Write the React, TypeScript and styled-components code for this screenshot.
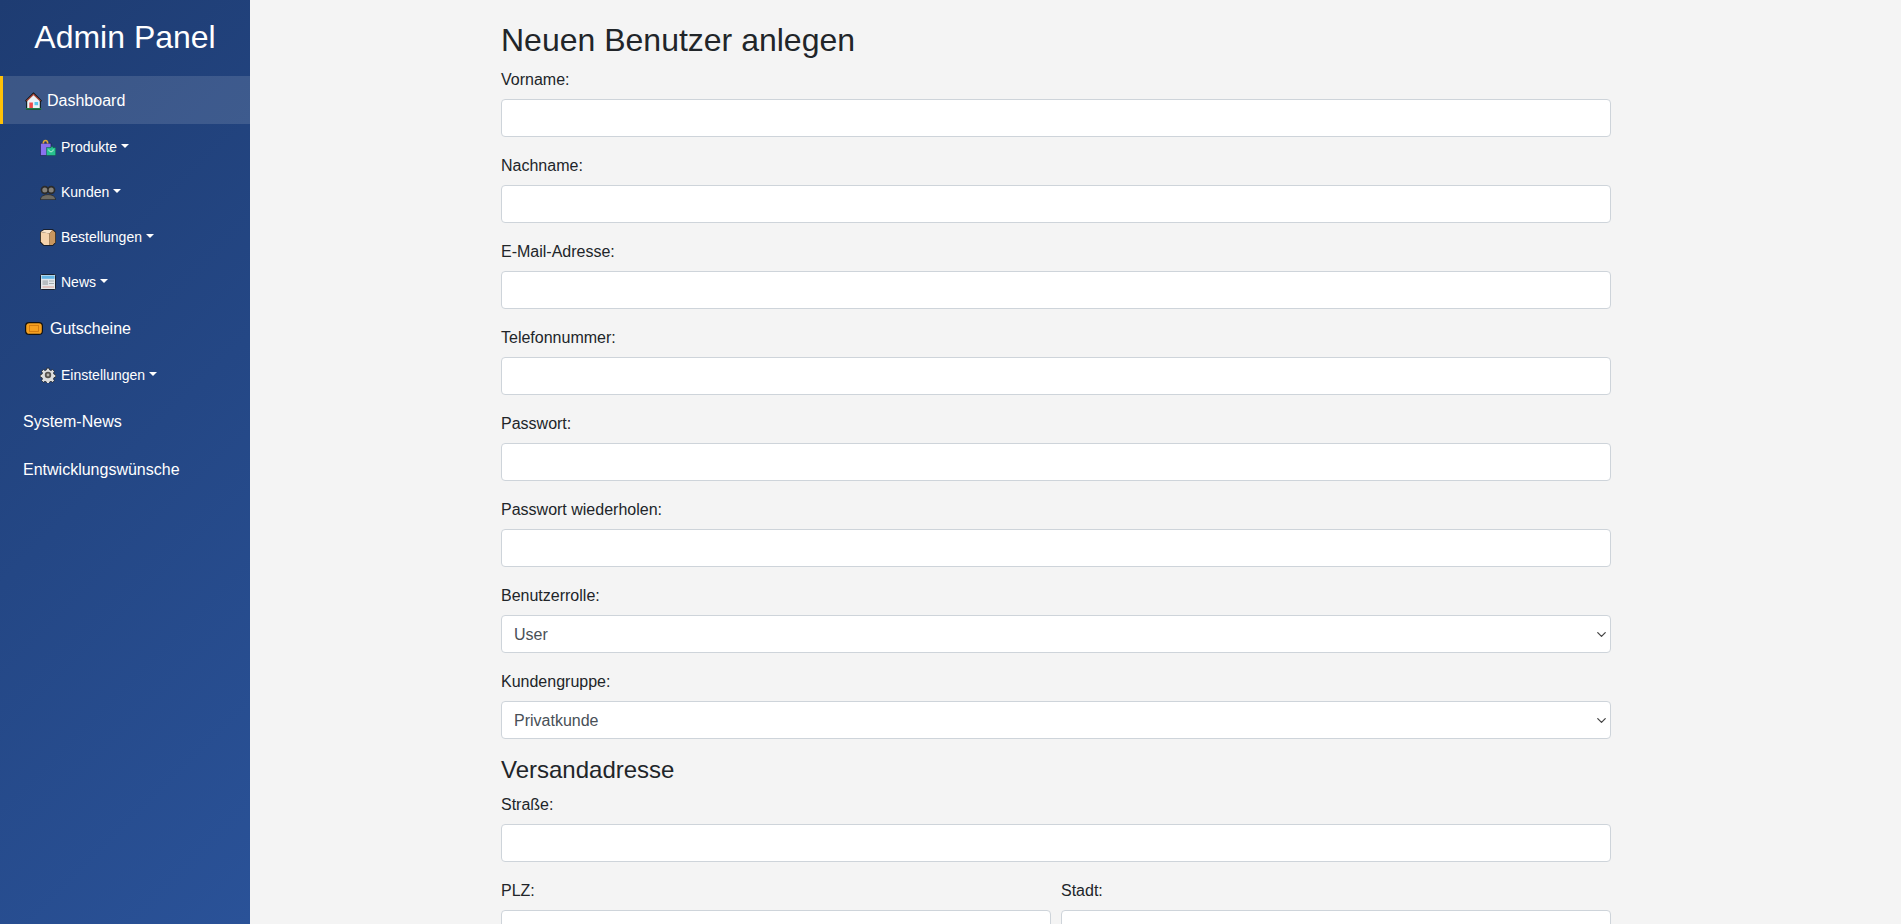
import styled, { createGlobalStyle } from 'styled-components';
import { ChevronDown } from 'lucide-react';

const GlobalStyle = createGlobalStyle`
  html, body {
    margin: 0;
    height: 100%;
    overflow: hidden;
  }
  body {
    background: #f4f4f4;
    color: #212529;
    font-family: "Liberation Sans", Arial, sans-serif;
    font-size: 16px;
    line-height: 1.5;
  }
  * {
    box-sizing: border-box;
  }
`;

const HouseIcon = () => (
  <svg width="17" height="18" viewBox="0 0 17 18">
    <path d="M8.500 .3 17 8.800 15.800 10v7.700H1.200V10L0 8.800z" fill="#0c1410" />
    <path d="M8.500 2.500 14.800 8.500v8H2.200v-8z" fill="#eaf3f6" />
    <path d="M8.500 1.500 16 8.800l-1 .7-6.500-6.200L2 9.500l-1-.7z" fill="#b04a40" />
    <rect x="4.300" y="10.500" width="3.600" height="6" fill="#ee4c4a" />
    <rect x="9.500" y="10" width="3.600" height="3.200" fill="#56c6ea" />
    <rect x=".8" y="16" width="15.400" height="1.600" fill="#1f7a45" />
  </svg>
);

const BagsIcon = () => (
  <svg width="16" height="17" viewBox="0 0 16 17">
    <path d="M.4 4.200h10.600v12.400H.4z" fill="#8a72ee" stroke="#1a1a44" strokeWidth=".7" />
    <path d="M3.300 4.500C3.300 .4 7.700 .4 7.700 4.500" fill="none" stroke="#e0a838" strokeWidth="1.600" />
    <path d="M6.500 8.500H11l1-2 1 2h2.700v8.100H6.500z" fill="#27c08f" stroke="#0f4a42" strokeWidth=".5" />
    <path d="M8.800 10.500c0 3 4.400 3 4.400 0" fill="none" stroke="#c6f5dd" strokeWidth="1" />
  </svg>
);

const BustsIcon = () => (
  <svg width="16" height="15" viewBox="0 0 16 15">
    <circle cx="4.800" cy="5" r="4.200" fill="#2b2b2b" />
    <circle cx="11.200" cy="5" r="4.200" fill="#2b2b2b" />
    <circle cx="4.800" cy="5" r="2.500" fill="#86827a" />
    <circle cx="11.200" cy="5" r="2.500" fill="#86827a" />
    <path d="M.3 14.700c0-6.800 15.400-6.800 15.400 0z" fill="#6e6b63" stroke="#151515" strokeWidth=".6" />
  </svg>
);

const BoxIcon = () => (
  <svg width="16" height="17" viewBox="0 0 16 17">
    <path d="M0 3 3.500.2h9.500L16 3.200v10.300l-3 3.300H3.500L0 13.200z" fill="#141414" />
    <path d="M.8 3 4 1h8.500L9.500 4.500z" fill="#f8e2c8" />
    <path d="M.8 3 9.500 4.500V16H4L.8 12.800z" fill="#f4d2ac" />
    <path d="M9.500 4.500 12.500 1l2.800 2.500v9.700L12.700 16H9.500z" fill="#c8965f" />
  </svg>
);

const NewsIcon = () => (
  <svg width="16" height="16" viewBox="0 0 16 16">
    <rect x=".5" y=".5" width="15" height="15" rx="1" fill="#e4e8eb" stroke="#0e1420" strokeWidth=".9" />
    <rect x="1.600" y="1.600" width="13" height="3.200" fill="#63b4e4" />
    <rect x="2.500" y="6.300" width="5.500" height="4.700" fill="#b8bec2" />
    <rect x="9" y="6.500" width="5" height="1" fill="#a4abaf" />
    <rect x="9" y="9" width="5" height="1" fill="#a4abaf" />
    <rect x="2.500" y="12.500" width="11.500" height="1" fill="#dca196" />
  </svg>
);

const TicketIcon = () => (
  <svg width="18" height="13" viewBox="0 0 18 13">
    <rect x=".6" y=".6" width="16.800" height="11.800" rx="3.500" fill="#f5a020" stroke="#111" strokeWidth="1.200" />
    <rect x="4.500" y="3.500" width="9" height="6" fill="none" stroke="#d07a10" strokeWidth=".9" />
  </svg>
);

const GearIcon = () => (
  <svg width="16" height="16" viewBox="0 0 16 16">
    <path
      d="M6.500.4h3l.4 2.100 1.600.7 1.800-1.200 2.200 2.200-1.200 1.800.7 1.500 2 .5v3l-2 .4-.7 1.600 1.200 1.800-2.200 2.100-1.800-1.200-1.600.7-.4 2h-3l-.4-2-1.600-.7-1.800 1.200-2.200-2.100 1.200-1.800-.7-1.600-2-.4v-3l2-.5.7-1.500-1.200-1.800 2.200-2.200 1.800 1.200 1.600-.7z"
      fill="#dedede"
      stroke="#1c1c1c"
      strokeWidth=".8"
      transform="translate(1.100 .8) scale(.86)"
    />
    <circle cx="8" cy="8" r="3.200" fill="#57534e" />
    <circle cx="8" cy="8" r="1.400" fill="#b8b3aa" />
  </svg>
);

const menu = [
  { label: 'Dashboard', icon: <HouseIcon />, active: true, gap: 5 },
  { label: 'Produkte', icon: <BagsIcon />, sub: true },
  { label: 'Kunden', icon: <BustsIcon />, sub: true },
  { label: 'Bestellungen', icon: <BoxIcon />, sub: true },
  { label: 'News', icon: <NewsIcon />, sub: true },
  { label: 'Gutscheine', icon: <TicketIcon />, gap: 7 },
  { label: 'Einstellungen', icon: <GearIcon />, sub: true },
  { label: 'System-News' },
  { label: 'Entwicklungswünsche' },
];

const accountFields = ['Vorname', 'Nachname', 'E-Mail-Adresse', 'Telefonnummer', 'Passwort', 'Passwort wiederholen'];

const Select = ({ value }: { value: string }) => (
  <SSelectWrap>
    <SSelect defaultValue={value}>
      <option>{value}</option>
    </SSelect>
    <SChevron size={15} strokeWidth={2} />
  </SSelectWrap>
);

export default function App() {
  return (
    <>
      <GlobalStyle />
      <SLayout>
        <SSidebar>
          <STitle>Admin Panel</STitle>
          <SNav>
            {menu.map((item) => (
              <SNavLink
                key={item.label}
                href="#"
                $active={item.active}
                $sub={item.sub}
                $hasIcon={!!item.icon}
                $gap={item.gap ?? 5}
              >
                {item.icon}
                <span>{item.label}</span>
                {item.sub && <SCaret />}
              </SNavLink>
            ))}
          </SNav>
        </SSidebar>
        <SMain>
          <SHeading>Neuen Benutzer anlegen</SHeading>
          {accountFields.map((name) => (
            <SField key={name}>
              <SLabel>{name}:</SLabel>
              <SInput type="text" />
            </SField>
          ))}
          <SField>
            <SLabel>Benutzerrolle:</SLabel>
            <Select value="User" />
          </SField>
          <SField>
            <SLabel>Kundengruppe:</SLabel>
            <Select value="Privatkunde" />
          </SField>
          <SSubHeading>Versandadresse</SSubHeading>
          <SField>
            <SLabel>Straße:</SLabel>
            <SInput type="text" />
          </SField>
          <SRow>
            <SField>
              <SLabel>PLZ:</SLabel>
              <SInput type="text" />
            </SField>
            <SField>
              <SLabel>Stadt:</SLabel>
              <SInput type="text" />
            </SField>
          </SRow>
        </SMain>
      </SLayout>
    </>
  );
}

const SLayout = styled.div`
  display: flex;
  height: 100vh;
  overflow: hidden;
`;
const SSidebar = styled.aside`
  flex: 0 0 250px;
  background: linear-gradient(135deg, #1e3c72, #2a5298);
  color: #fff;
`;
const STitle = styled.h1`
  margin: 0;
  padding-top: 18px;
  height: 76px;
  font-size: 32px;
  font-weight: 400;
  line-height: 38px;
  text-align: center;
`;
const SNav = styled.nav`
  display: flex;
  flex-direction: column;
`;
const SNavLink = styled.a<{ $active?: boolean; $sub?: boolean; $hasIcon: boolean; $gap: number }>`
  display: flex;
  align-items: center;
  gap: ${(p) => p.$gap}px;
  padding: 13px 20px 11px;
  padding-left: ${(p) => (p.$sub ? 37 : p.$hasIcon ? 22 : 20)}px;
  border-left: 3px solid ${(p) => (p.$active ? '#ffc107' : 'transparent')};
  background: ${(p) => (p.$active ? 'rgba(255, 255, 255, 0.13)' : 'transparent')};
  color: #fff;
  font-size: ${(p) => (p.$sub ? 14 : 16)}px;
  line-height: ${(p) => (p.$sub ? 21 : 24)}px;
  text-decoration: none;

  svg {
    margin-top: -1px;
  }
`;
const SCaret = styled.i`
  width: 0;
  height: 0;
  margin-left: -1px;
  margin-bottom: 3px;
  border-top: 4.200px solid #fff;
  border-left: 4.200px solid transparent;
  border-right: 4.200px solid transparent;
`;
const SMain = styled.main`
  width: 1110px;
  margin-left: 251px;
  padding-top: 21px;
`;
const SHeading = styled.h2`
  margin: 0 0 8px;
  font-size: 32px;
  font-weight: 400;
  line-height: 38.400px;
`;
const SSubHeading = styled.h4`
  margin: 0 0 8px;
  padding-top: 1px;
  height: 28.800px;
  font-size: 24px;
  font-weight: 400;
  line-height: 28.800px;
`;
const SField = styled.div`
  margin-bottom: 16px;
`;
const SRow = styled.div`
  display: grid;
  grid-template-columns: 1fr 1fr;
  gap: 10px;
`;
const SLabel = styled.label`
  display: block;
  padding-top: 1px;
  margin-bottom: 7px;
`;
const SInput = styled.input`
  display: block;
  width: 100%;
  height: 38px;
  padding: 6px 12px;
  border: 1px solid #ced4da;
  border-radius: 4px;
  background: #fff;
  color: #495057;
  font: inherit;
`;
const SSelectWrap = styled.div`
  position: relative;
`;
const SSelect = styled.select`
  display: block;
  width: 100%;
  height: 38px;
  padding: 7px 12px 6px;
  border: 1px solid #ced4da;
  border-radius: 4px;
  background: #fff;
  color: #495057;
  font: inherit;
  appearance: none;
`;
const SChevron = styled(ChevronDown)`
  position: absolute;
  top: 12px;
  right: 2.500px;
  color: #444;
  pointer-events: none;
`;
